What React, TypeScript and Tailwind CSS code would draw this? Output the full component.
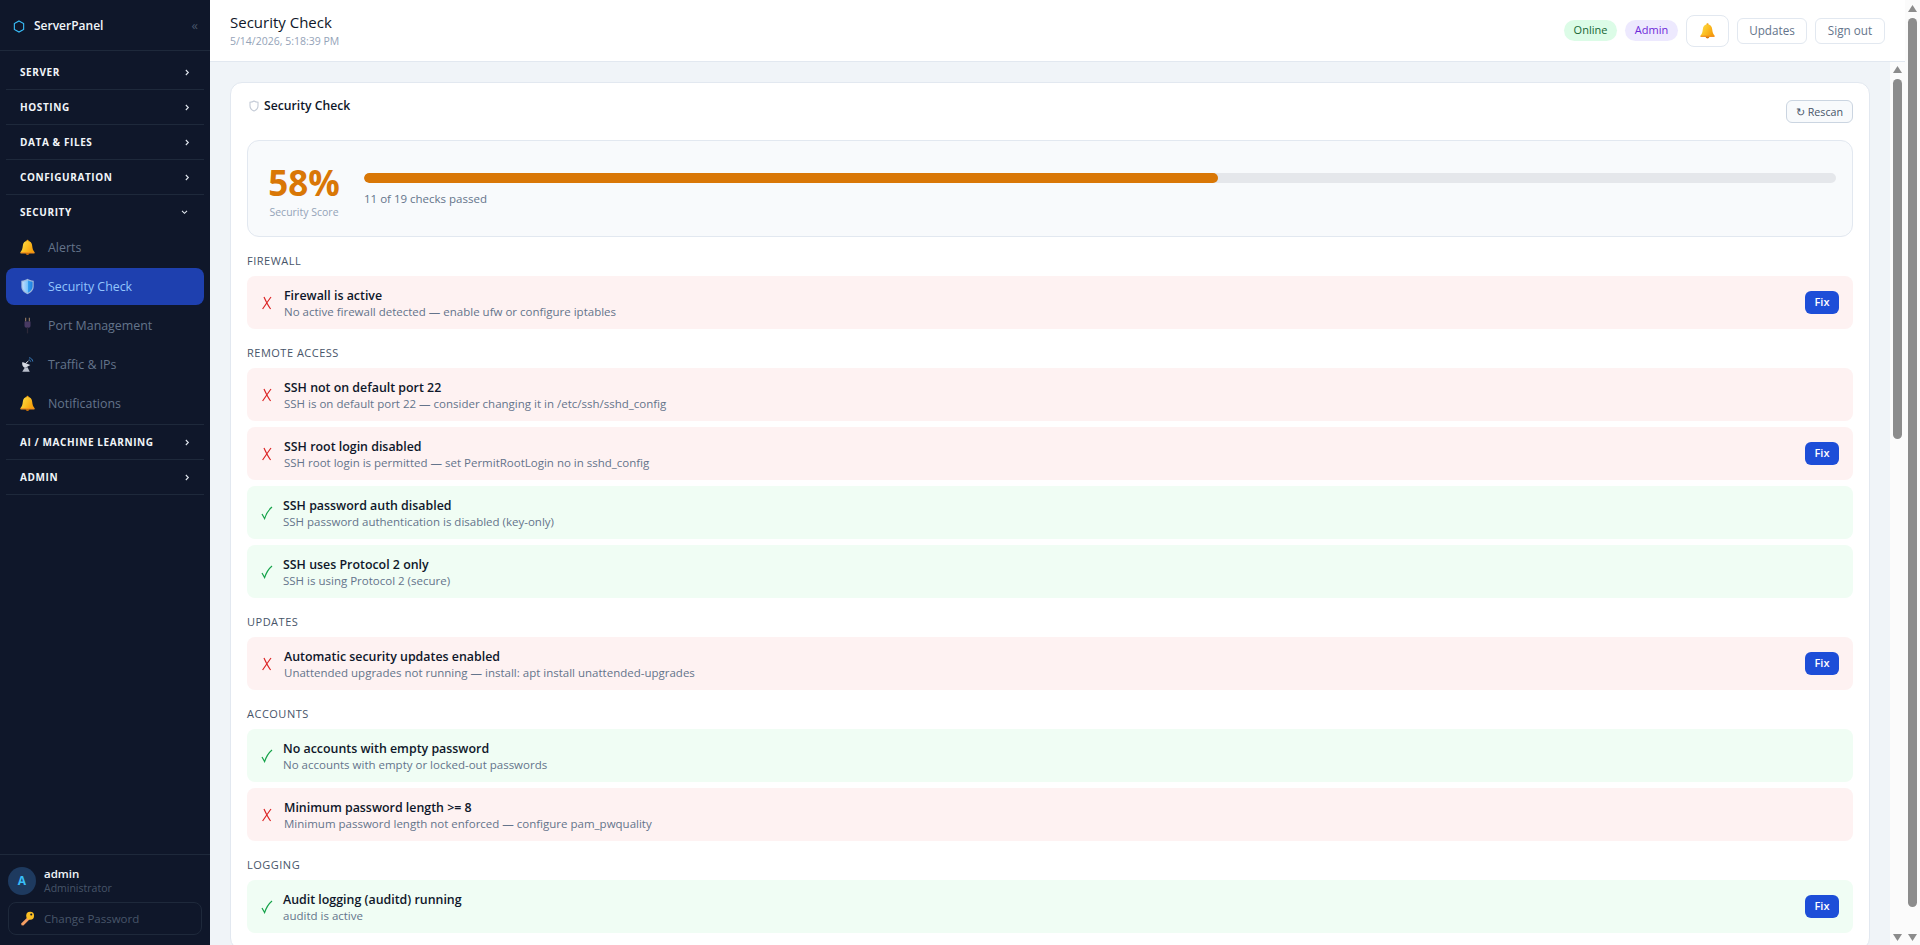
import React from 'react'

type Check = { title: string; desc: string; ok: boolean; fix?: boolean }

const sections: { label: string; checks: Check[] }[] = [
  { label: 'Firewall', checks: [
    { title: 'Firewall is active', desc: 'No active firewall detected — enable ufw or configure iptables', ok: false, fix: true },
  ] },
  { label: 'Remote Access', checks: [
    { title: 'SSH not on default port 22', desc: 'SSH is on default port 22 — consider changing it in /etc/ssh/sshd_config', ok: false },
    { title: 'SSH root login disabled', desc: 'SSH root login is permitted — set PermitRootLogin no in sshd_config', ok: false, fix: true },
    { title: 'SSH password auth disabled', desc: 'SSH password authentication is disabled (key-only)', ok: true },
    { title: 'SSH uses Protocol 2 only', desc: 'SSH is using Protocol 2 (secure)', ok: true },
  ] },
  { label: 'Updates', checks: [
    { title: 'Automatic security updates enabled', desc: 'Unattended upgrades not running — install: apt install unattended-upgrades', ok: false, fix: true },
  ] },
  { label: 'Accounts', checks: [
    { title: 'No accounts with empty password', desc: 'No accounts with empty or locked-out passwords', ok: true },
    { title: 'Minimum password length >= 8', desc: 'Minimum password length not enforced — configure pam_pwquality', ok: false },
  ] },
  { label: 'Logging', checks: [
    { title: 'Audit logging (auditd) running', desc: 'auditd is active', ok: true, fix: true },
  ] },
]

function BellIcon({ className }: { className?: string }) {
  return (
    <svg viewBox="0 0 16 17" className={className}>
      <defs>
        <linearGradient id="bellFill" x1="0" y1="0" x2="1" y2="0.5">
          <stop offset="0" stopColor="#fde047" />
          <stop offset="0.55" stopColor="#fbbf24" />
          <stop offset="1" stopColor="#f59e0b" />
        </linearGradient>
      </defs>
      <circle cx="8" cy="1.4" r="1.2" fill="#f59e0b" />
      <path d="M8 1.600C4.800 1.600 3.300 3.700 3 6.600 2.700 9.800 2 11.700.6 13.200v1.300h14.800v-1.300C14 11.700 13.300 9.800 13 6.600 12.700 3.700 11.200 1.600 8 1.600z" fill="url(#bellFill)" />
      <path d="M.6 13.500h14.800v1.200H.6z" fill="#f08c1e" />
      <path d="M6 14.700h4c-.2 1-1 1.700-2 1.700s-1.800-.7-2-1.700z" fill="#d97706" />
    </svg>
  )
}

function ShieldIcon() {
  return (
    <svg viewBox="0 0 16 18" className="h-[17px] w-[15px]">
      <defs>
        <linearGradient id="shieldFill" x1="0" y1="0" x2="1" y2="0">
          <stop offset="0" stopColor="#bfdbfe" />
          <stop offset="0.5" stopColor="#7cc4fa" />
          <stop offset="0.5" stopColor="#38a3f5" />
          <stop offset="1" stopColor="#1d7fe0" />
        </linearGradient>
      </defs>
      <path d="M8 .8c1.800 1.300 4 1.900 6.600 2v6.300c0 3.800-2.600 6.600-6.600 8.100-4-1.500-6.600-4.300-6.600-8.100V2.800C4 2.700 6.200 2.100 8 .8z" fill="#9fb9dc" />
      <path d="M8 2.300c1.500 1 3.400 1.500 5.400 1.600v5.200c0 3-2.200 5.400-5.400 6.700-3.200-1.300-5.400-3.700-5.400-6.700V3.900c2-.1 3.900-.6 5.400-1.600z" fill="url(#shieldFill)" />
    </svg>
  )
}

function PlugIcon() {
  return (
    <svg viewBox="0 0 16 18" className="h-[17px] w-[15px]">
      <path d="M6 .8v4M10 .8v4" stroke="#8a735f" strokeWidth="1.300" />
      <path d="M4.800 4.800h6.400v4.400c0 1.200-.8 1.900-1.900 2.100H6.700C5.600 11.100 4.800 10.400 4.800 9.200z" fill="#483a63" />
      <path d="M7.300 11h1.400v6.400H7.300z" fill="#2c2838" />
    </svg>
  )
}

function SatelliteIcon() {
  return (
    <svg viewBox="0 0 16 18" className="h-[17px] w-[15px]">
      <path d="M2.600 6.400c-1 2.600.2 5.400 2.800 6.400L11 9.400z" fill="#d5d9e2" />
      <path d="M5 12.400l-2.600 4.200h8l-2.400-4.600z" fill="#b9bfcc" />
      <path d="M6 7.800l3-2.600" stroke="#e2e8f0" strokeWidth="1" />
      <path d="M9.600 1.800c2.200.2 3.800 1.800 4 4M9.400 4c1 .1 2 1 2 2" fill="none" stroke="#3b82c4" strokeWidth="1" />
    </svg>
  )
}

function KeyIcon() {
  return (
    <svg viewBox="0 0 16 16" className="h-[15px] w-[15px]">
      <path d="M8.600 6.200L1.200 13.400l.4 1.800 2 .2 7.200-7.200z" fill="#f59e63" />
      <circle cx="10.800" cy="5" r="4.200" fill="#fbbf24" />
      <circle cx="12" cy="3.800" r="1.100" fill="#0f172a" />
    </svg>
  )
}

function Chevron({ open }: { open?: boolean }) {
  if (open) {
    return (
      <svg viewBox="0 0 8 6" className="mr-[2px] h-[5px] w-[7px]">
        <path d="M1 1l3 3 3-3" fill="none" stroke="#e2e8f0" strokeWidth="1.300" />
      </svg>
    )
  }
  return (
    <svg viewBox="0 0 6 8" className="h-[7px] w-[5px]">
      <path d="M1 1l3 3-3 3" fill="none" stroke="#e2e8f0" strokeWidth="1.300" />
    </svg>
  )
}

function NavGroup({ label, open, children }: { label: string; open?: boolean; children?: React.ReactNode }) {
  return (
    <div className={open ? '' : 'border-b border-[#1e293b]'}>
      <div className="flex h-[34px] items-center justify-between pl-[14px] pr-[14px]">
        <span className="text-[10px] font-bold uppercase tracking-[0.6px] text-[#f1f5f9]">{label}</span>
        <Chevron open={open} />
      </div>
      {children}
    </div>
  )
}

function NavItem({ icon, label, active }: { icon: React.ReactNode; label: string; active?: boolean }) {
  return (
    <div className={`flex h-[37px] items-center gap-[13px] rounded-lg pl-[14px] text-[12.4px] ${active ? 'bg-[#1e40af] text-[#93c5fd]' : 'text-[#64748b]'}`}>
      {icon}
      <span className="pt-[1px]">{label}</span>
    </div>
  )
}

function Sidebar() {
  return (
    <aside className="flex h-full w-[210px] shrink-0 flex-col bg-[#0f172a]">
      <div className="flex h-[51px] items-center justify-between border-b border-[#1e293b] pl-[13px] pr-[12px] pt-[2px]">
        <div className="flex items-center gap-[9px]">
          <svg viewBox="0 0 12 14" className="h-[13px] w-[12px]">
            <path d="M6 1l5 2.900v6.200L6 13l-5-2.900V3.900z" fill="none" stroke="#38bdf8" strokeWidth="1.200" />
          </svg>
          <span className="text-[12px] font-semibold text-[#f1f5f9]">ServerPanel</span>
        </div>
        <span className="text-[13px] text-[#475569]">«</span>
      </div>
      <nav className="flex-1 px-[6px] pt-[4px]">
        <NavGroup label="Server" />
        <NavGroup label="Hosting" />
        <NavGroup label="Data & Files" />
        <NavGroup label="Configuration" />
        <div className="border-b border-[#1e293b] pb-[1px]">
          <NavGroup label="Security" open>
            <div className="flex flex-col gap-[2px] pb-[1px]">
              <NavItem icon={<BellIcon className="h-[17px] w-[15px]" />} label="Alerts" />
              <NavItem icon={<ShieldIcon />} label="Security Check" active />
              <NavItem icon={<PlugIcon />} label="Port Management" />
              <NavItem icon={<SatelliteIcon />} label="Traffic & IPs" />
              <NavItem icon={<BellIcon className="h-[17px] w-[15px]" />} label="Notifications" />
            </div>
          </NavGroup>
        </div>
        <NavGroup label="AI / Machine Learning" />
        <NavGroup label="Admin" />
      </nav>
      <div className="border-t border-[#1e293b] px-[8px] pb-[10px] pt-[12px]">
        <div className="flex h-[28px] items-center gap-[8px]">
          <div className="flex h-[28px] w-[28px] items-center justify-center rounded-full bg-[#1e3a5f] text-[12px] font-bold text-[#38bdf8]">A</div>
          <div>
            <div className="text-[11.5px] font-semibold leading-[15px] text-[#f1f5f9]">admin</div>
            <div className="text-[10.5px] leading-[15px] text-[#475569]">Administrator</div>
          </div>
        </div>
        <div className="mt-[7px] flex h-[33px] w-[194px] items-center gap-[9px] rounded-lg border border-[#1e293b] pl-[11px] text-[11.5px] text-[#475569]">
          <KeyIcon />
          <span>Change Password</span>
        </div>
      </div>
    </aside>
  )
}

function Header() {
  return (
    <header className="flex h-[62px] shrink-0 items-center justify-between border-b border-[#e2e8f0] bg-white pl-[20px] pr-[20px]">
      <div>
        <div className="text-[15px] font-medium leading-[20px] text-[#0f172a]">Security Check</div>
        <div className="mt-[2px] text-[10.5px] leading-[15px] text-[#94a3b8]">5/14/2026, 5:18:39 PM</div>
      </div>
      <div className="flex items-center gap-[8px]">
        <span className="flex h-[21px] w-[53px] items-center justify-center rounded-full bg-[#dcfce7] text-[11px] font-medium text-[#166534]">Online</span>
        <span className="flex h-[21px] w-[53px] items-center justify-center rounded-full bg-[#ede9fe] text-[11px] font-medium text-[#6d28d9]">Admin</span>
        <div className="flex h-[32px] w-[43px] items-center justify-center rounded-lg border border-[#e2e8f0]">
          <BellIcon className="h-[16px] w-[15px]" />
        </div>
        <div className="flex h-[26px] w-[70px] items-center justify-center rounded-md border border-[#e2e8f0] pt-[1px] text-[11.7px] text-[#64748b]">Updates</div>
        <div className="flex h-[26px] w-[70px] items-center justify-center rounded-md border border-[#e2e8f0] pt-[1px] text-[11.7px] text-[#64748b]">Sign out</div>
      </div>
    </header>
  )
}

function CheckRow({ check }: { check: Check }) {
  return (
    <div className={`flex h-[53px] items-center rounded-lg pl-[14px] pr-[14px] ${check.ok ? 'bg-[#f0fdf4]' : 'bg-[#fef2f2]'}`}>
      {check.ok ? (
        <svg viewBox="0 0 12 14" className="mr-[10px] h-[14px] w-[12px] shrink-0">
          <path d="M1 8l2.600 4.600C5 8.400 7.400 4 11 1" fill="none" stroke="#16a34a" strokeWidth="1.200" />
        </svg>
      ) : (
        <svg viewBox="0 0 12 14" className="mr-[11px] h-[14px] w-[12px] shrink-0">
          <path d="M3 1c1.800 4 3.600 8 6.600 12M10 1C7 5 4.400 9 1.600 13" fill="none" stroke="#dc2626" strokeWidth="1.200" />
        </svg>
      )}
      <div className="flex-1 pt-[1px]">
        <div className="text-[12.4px] font-semibold leading-[17px] text-[#0f172a]">{check.title}</div>
        <div className="text-[11.5px] leading-[16px] text-[#64748b]">{check.desc}</div>
      </div>
      {check.fix && (
        <div className="flex h-[23px] w-[34px] items-center justify-center rounded-md bg-[#1d4ed8] text-[11px] font-semibold text-white">Fix</div>
      )}
    </div>
  )
}

function SecurityCard() {
  return (
    <div className="rounded-xl border border-[#e2e8f0] bg-white px-[16px] pb-[16px] pt-[14px]">
      <div className="flex h-[43px] items-start justify-between">
        <div className="flex items-center gap-[5px]">
          <svg viewBox="0 0 10 12" className="ml-[2px] h-[12px] w-[10px]">
            <path d="M5 1c1.200.8 2.500 1.100 4 1.200v3.500C9 8 7.500 10 5 11 2.500 10 1 8 1 5.700V2.200C2.500 2.100 3.800 1.800 5 1z" fill="none" stroke="#c3cad6" strokeWidth="1.100" />
          </svg>
          <span className="text-[12.2px] font-semibold leading-[18px] text-[#0f172a]">Security Check</span>
        </div>
        <div className="mt-[3px] flex h-[23px] w-[67px] items-center justify-center rounded-md border border-[#cbd5e1] bg-[#f8fafc] pt-[1px] text-[10.7px] text-[#475569]">↻ Rescan</div>
      </div>
      <div className="flex h-[97px] items-center gap-[24px] rounded-xl border border-[#e2e8f0] bg-[#f8fafc] pl-[20px] pr-[16px]">
        <div className="mt-[3px] w-[72px] text-center">
          <div className="text-[35px] font-bold leading-[44px] text-[#d97706]">58%</div>
          <div className="whitespace-nowrap text-[10.5px] leading-[14px] text-[#94a3b8]">Security Score</div>
        </div>
        <div className="mt-[1px] flex-1">
          <div className="h-[10px] overflow-hidden rounded-full bg-[#e5e7eb]">
            <div className="h-full rounded-full bg-[#d97706]" style={{ width: '58%' }} />
          </div>
          <div className="mt-[8px] text-[11.5px] leading-[15px] text-[#64748b]">11 of 19 checks passed</div>
        </div>
      </div>
      {sections.map((section) => (
        <section key={section.label} className="mt-[16px]">
          <div className="mb-[8px] text-[11px] font-medium uppercase leading-[15px] tracking-[0.5px] text-[#475569]">{section.label}</div>
          <div className="flex flex-col gap-[6px]">
            {section.checks.map((check) => (
              <CheckRow key={check.title} check={check} />
            ))}
          </div>
        </section>
      ))}
    </div>
  )
}

// stands in for the two native scrollbars in the shot
function ScrollBar({ topGap, thumb }: { topGap: string; thumb: string }) {
  return (
    <div className="flex h-full w-[15px] shrink-0 flex-col items-center bg-[#fbfbfb]">
      <svg viewBox="0 0 9 7" className={`h-[7px] w-[9px] shrink-0 ${topGap}`}>
        <path d="M4.500 0L9 7H0z" fill="#8c8c8c" />
      </svg>
      <div className={`mt-[6px] w-[9px] rounded-full bg-[#8c8c8c] ${thumb}`} />
      <svg viewBox="0 0 9 7" className="mb-[4px] mt-auto h-[7px] w-[9px] shrink-0">
        <path d="M4.500 7L9 0H0z" fill="#8c8c8c" />
      </svg>
    </div>
  )
}

export default function App() {
  return (
    <div className="flex h-[945px] w-[1920px] overflow-hidden font-[family-name:'Open_Sans',sans-serif]">
      <Sidebar />
      <div className="flex h-full min-w-0 flex-1 flex-col">
        <Header />
        <div className="flex min-h-0 flex-1">
          <main className="min-w-0 flex-1 overflow-hidden bg-[#f0f4f8] pl-[20px] pr-[20px] pt-[20px]">
            <SecurityCard />
          </main>
          <ScrollBar topGap="mt-[4px]" thumb="h-[360px]" />
        </div>
      </div>
      <ScrollBar topGap="mt-[5px]" thumb="h-[889px]" />
    </div>
  )
}
